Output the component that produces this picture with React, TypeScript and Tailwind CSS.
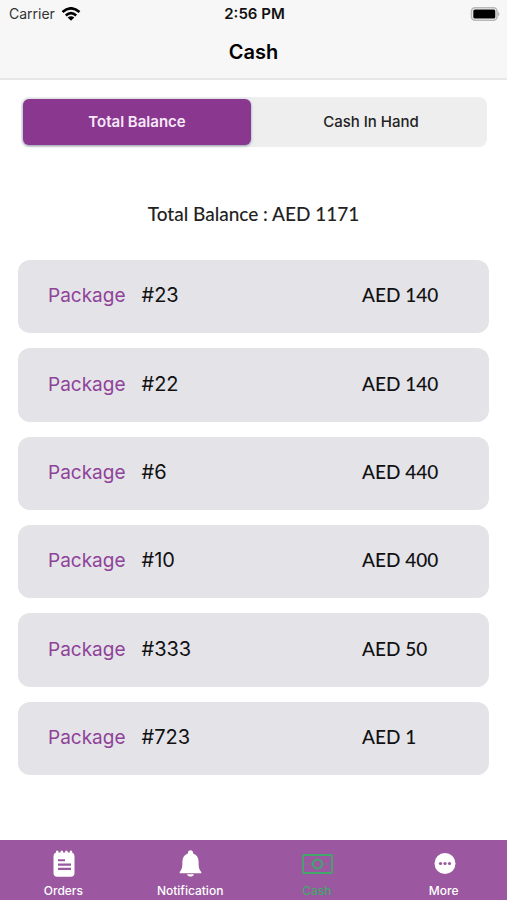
import React, { useState } from 'react';

interface Package {
  id: number;
  amount: number;
}

const PACKAGES: Package[] = [
  { id: 23, amount: 140 },
  { id: 22, amount: 140 },
  { id: 6, amount: 440 },
  { id: 10, amount: 400 },
  { id: 333, amount: 50 },
  { id: 723, amount: 1 },
];

const SEGMENTS = ['Total Balance', 'Cash In Hand'] as const;

const OrdersIcon = () => (
  <svg className="w-8 h-8" viewBox="0 0 32 32" fill="none">
    <path
      d="M9 4.600V3.200q1.200-1.600 2.400 0V4.600H13.600V3.200q1.200-1.600 2.400 0V4.600H18.200V3.200q1.200-1.600 2.400 0V4.600H22.800V3.200q1.200-1.600 2.400 0V4.700Q27.500 5.200 27.500 8V25Q27.500 28.700 23.800 28.700H10.200Q6.500 28.700 6.500 25V8Q6.500 5.200 9 4.600z"
      fill="#fff"
    />
    <path d="M11 12.300h7M11 16.600h13M11 20.900h13" stroke="#9b579f" strokeWidth="2.100" />
  </svg>
);

const BellIcon = () => (
  <svg className="w-8 h-8" viewBox="0 0 32 32" fill="#fff">
    <path d="M16.500 2.200c1.500 0 2.600 1.100 2.600 2.600v.6c3.700 1.200 5.500 4.200 5.500 8.300 0 5.300.4 7.800 2.700 10.200v1.300H5.700v-1.300c2.300-2.400 2.700-4.900 2.700-10.200 0-4.100 1.800-7.100 5.500-8.300v-.6c0-1.500 1.100-2.600 2.600-2.600z" />
    <path d="M13 26.200h7c-.5 1.500-1.800 2.400-3.500 2.400s-3-.9-3.500-2.400z" />
  </svg>
);

const CashIcon = () => (
  <svg className="w-8 h-8" viewBox="0 0 32 32" fill="none" stroke="#43a76b">
    <rect x="2" y="7" width="29" height="18" rx="1" strokeWidth="1.800" />
    <circle cx="16.500" cy="16" r="4.500" strokeWidth="2" />
    <path d="M7 15v2M10 15.500v1M23 15.500v1M26 15v2" strokeWidth="1" />
  </svg>
);

const MoreIcon = () => (
  <svg className="w-8 h-8" viewBox="0 0 32 32">
    <circle cx="17" cy="15.500" r="10.500" fill="#fff" />
    <circle cx="12.500" cy="15.500" r="1.600" fill="#9b579f" />
    <circle cx="17" cy="15.500" r="1.600" fill="#9b579f" />
    <circle cx="21.500" cy="15.500" r="1.600" fill="#9b579f" />
  </svg>
);

const TABS = [
  { name: 'Orders', Icon: OrdersIcon },
  { name: 'Notification', Icon: BellIcon },
  { name: 'Cash', Icon: CashIcon },
  { name: 'More', Icon: MoreIcon },
];

const StatusBar: React.FC = () => (
  <div className="grid grid-cols-3 items-center h-7 pl-[9px] pr-[7px]">
    <div className="flex items-center gap-1.5 text-sm text-[#333]">
      Carrier
      <svg className="w-5 h-[14px]" viewBox="-1 0 20 14" fill="none" stroke="#000" strokeWidth="2.600">
        <path d="M.5 4.900Q9-2.300 17.500 4.900" />
        <path d="M3.800 8.500Q9 3.700 14.200 8.500" />
        <path d="M9 13.800L5.700 10.600Q9 7.700 12.300 10.600z" fill="#000" stroke="none" />
      </svg>
    </div>
    <div className="text-[15px] font-semibold text-center text-[#111]">2:56 PM</div>
    <svg className="w-[30px] h-[14px] justify-self-end" viewBox="0 0 30 14">
      <rect x="1.500" y="0.800" width="25.500" height="12.400" rx="3.500" fill="#f7f7f7" stroke="#b8b8b8" strokeWidth="1.600" />
      <rect x="3.300" y="2.600" width="22" height="8.800" rx="1.500" fill="#000" />
      <path d="M28 4.500q3 2.500 0 5z" fill="#b8b8b8" />
    </svg>
  </div>
);

const PackageCard: React.FC<{ item: Package }> = ({ item }) => (
  <li className="flex flex-1 items-center min-h-16 rounded-xl bg-[#e4e3e8] pl-[30px] pb-0.5">
    <div className="flex flex-1 items-baseline gap-4 text-xl">
      <span className="text-[19px] text-[#8f4299]">Package</span>
      <span className="text-[#111]">#{item.id}</span>
    </div>
    <span className="w-[127px] font-[Lato] text-[19px] font-medium text-[#111]">AED {item.amount}</span>
  </li>
);

const App: React.FC = () => {
  const [segment, setSegment] = useState<string>('Total Balance');
  const [activeTab, setActiveTab] = useState('Cash');

  return (
    <div className="flex flex-col min-h-screen bg-white font-[Inter,sans-serif]">
      <header className="bg-[#f7f7f7] border-b-2 border-[#e7e7e7]">
        <StatusBar />
        <h1 className="pt-2 pb-2.5 text-xl leading-8 font-semibold text-center text-black">Cash</h1>
      </header>

      <main className="flex flex-col flex-1 px-[18px] pt-[17px] pb-[65px]">
        <div className="flex gap-1.5 ml-[3px] mr-0.5 rounded-lg bg-[#eeeeef] p-0.5">
          {SEGMENTS.map(name => (
            <button
              key={name}
              onClick={() => setSegment(name)}
              className={`flex-1 h-[46px] rounded-md text-[15px] ${
                segment === name
                  ? 'bg-[#8a3790] text-[#f8e8f8] font-semibold shadow-sm shadow-gray-400'
                  : 'text-[#222] font-medium'
              }`}
            >
              {name}
            </button>
          ))}
        </div>

        <p className="pt-[53px] pb-8 font-[Lato] text-[19px] leading-7 font-medium text-center text-[#222]">
          Total Balance : AED 1171
        </p>

        {/* Packages */}
        <ul className="flex flex-col flex-1 gap-[15px]">
          {PACKAGES.map(item => (
            <PackageCard key={item.id} item={item} />
          ))}
        </ul>
      </main>

      <nav className="grid grid-cols-4 h-[60px] bg-[#9b579f]">
        {TABS.map(({ name, Icon }) => (
          <button
            key={name}
            onClick={() => setActiveTab(name)}
            className={`flex flex-col items-center pt-2 text-xs font-medium ${
              activeTab === name ? 'text-[#43a76b]' : 'text-white'
            }`}
          >
            <Icon />
            <span className="leading-[22px]">{name}</span>
          </button>
        ))}
      </nav>
    </div>
  );
};

export default App;
